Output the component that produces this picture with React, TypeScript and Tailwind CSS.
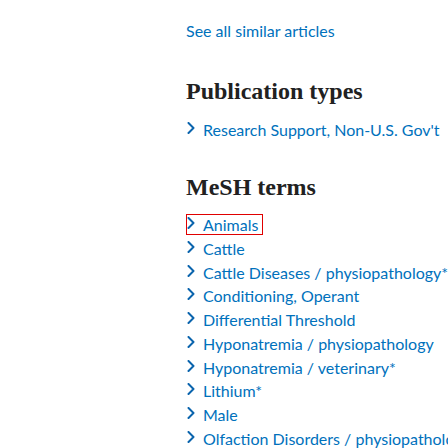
import React from 'react';

const meshTerms = [
    'Cattle',
    'Cattle Diseases / physiopathology*',
    'Conditioning, Operant',
    'Differential Threshold',
    'Hyponatremia / physiopathology',
    'Hyponatremia / veterinary*',
    'Lithium*',
    'Male',
    'Olfaction Disorders / physiopathology*',
];

function Chevron() {
    return (
        <svg width="8" height="12" viewBox="0 0 8 12" className="shrink-0 mb-[4px]" fill="none">
            <path d="M1.5 1 L6.5 6 L1.5 11" stroke="#0a64ad" strokeWidth="2" strokeLinecap="round" strokeLinejoin="round" />
        </svg>
    );
}

function TermRow({ label, boxed = false }: { label: string; boxed?: boolean }) {
    return (
        <div className={boxed ? 'flex items-center h-[25px]' : 'flex items-center h-[23.75px]'}>
            <span
                className={
                    boxed
                        ? 'inline-flex items-center gap-[8px] h-[21px] pr-[4px] border border-[#e00000] leading-[19px]'
                        : 'inline-flex items-center gap-[8px] pr-[4px] border border-transparent leading-[22px]'
                }
            >
                <Chevron />
                <span className="whitespace-nowrap">{label}</span>
            </span>
        </div>
    );
}

export default function App() {
    return (
        <div className="w-[448px] h-[448px] overflow-hidden bg-white pl-[186px] pt-[19px] font-['Lato',sans-serif] text-[16px] text-[#0071bc]">
            <div className="leading-[24px] whitespace-nowrap">See all similar articles</div>

            {/* Publication types */}
            <h2 className="mt-[33px] font-['Liberation_Serif',serif] font-bold text-[24px] leading-[30px] text-[#212121] whitespace-nowrap">
                Publication types
            </h2>
            <div className="mt-[12px] h-[24px] flex items-center">
                <span className="inline-flex items-center gap-[8px] border border-transparent leading-[22px]">
                    <Chevron />
                    <span className="whitespace-nowrap">Research Support, Non-U.S. Gov't</span>
                </span>
            </div>

            {/* MeSH terms */}
            <h2 className="mt-[30px] font-['Liberation_Serif',serif] font-bold text-[24px] leading-[30px] text-[#212121] whitespace-nowrap">
                MeSH terms
            </h2>
            <div className="mt-[10px] flex flex-col">
                <TermRow label="Animals" boxed />
                {meshTerms.map((t) => (
                    <TermRow key={t} label={t} />
                ))}
            </div>
        </div>
    );
}
